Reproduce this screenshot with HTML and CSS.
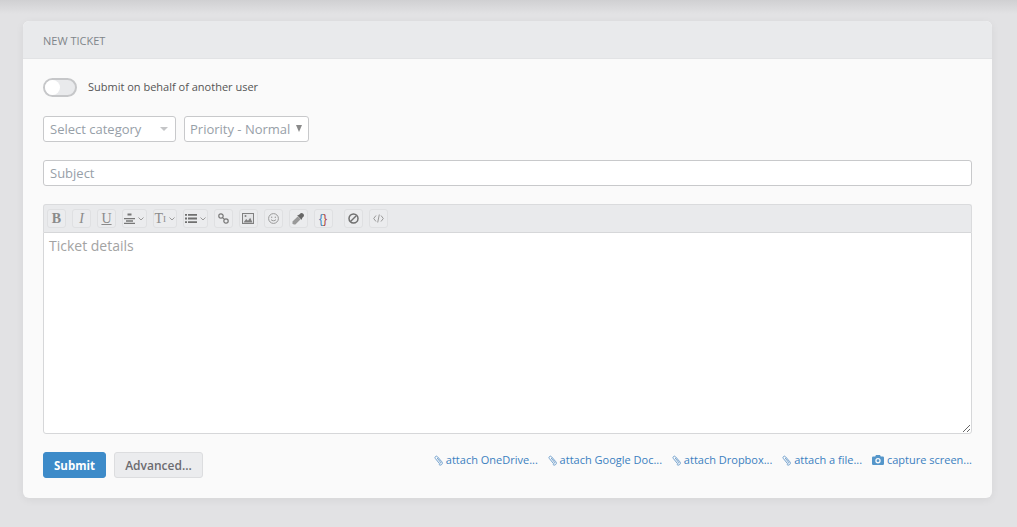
FILE: index.html
```html
<!DOCTYPE html>
<html lang="en">
<head>
    <meta charset="UTF-8">
    <title>New Ticket</title>
    <link rel="stylesheet" href="styles.css">
</head>
<body>
    <div class="top-shadow"></div>
    <div class="card">
        <div class="card-header">NEW TICKET</div>
        <div class="card-body">
            <div class="behalf-row">
                <span class="toggle"><span class="knob"></span></span>
                <span class="behalf-label">Submit on behalf of another user</span>
            </div>

            <div class="select-row">
                <div class="select select-category">
                    <span>Select category</span>
                    <span class="caret"></span>
                </div>
                <div class="select select-priority">
                    <span>Priority - Normal</span>
                    <span class="caret-big"></span>
                </div>
            </div>

            <input class="subject" type="text" placeholder="Subject">

            <div class="editor">
                <div class="toolbar">
                    <span class="tool tool-text bold">B</span>
                    <span class="tool tool-text italic">I</span>
                    <span class="tool tool-text underline">U</span>
                    <span class="tool tool-drop">
                        <svg width="11" height="11" viewBox="0 0 11 11"><path d="M3.500 0.500h4v2h-4zM0 5h11v1.200H0zM2 7.300h7v1.500H2zM0 9.800h11V11H0z" fill="#777"/></svg>
                        <svg class="chev" width="6" height="4" viewBox="0 0 6 4"><path d="M0.500 0.500l2.500 2.500 2.500-2.500" fill="none" stroke="#999"/></svg>
                    </span>
                    <span class="tool tool-drop tool-size">
                        <span class="size-t">T</span><span class="size-i">I</span>
                        <svg class="chev" width="6" height="4" viewBox="0 0 6 4"><path d="M0.500 0.500l2.500 2.500 2.500-2.500" fill="none" stroke="#999"/></svg>
                    </span>
                    <span class="tool tool-drop">
                        <svg width="12" height="9" viewBox="0 0 12 9"><path d="M0 0h2v1.800H0zM3 0h9v1.800H3zM0 3.600h2v1.800H0zM3 3.600h9v1.800H3zM0 7.200h2V9H0zM3 7.200h9V9H3z" fill="#707070"/></svg>
                        <svg class="chev" width="6" height="4" viewBox="0 0 6 4"><path d="M0.500 0.500l2.500 2.500 2.500-2.500" fill="none" stroke="#999"/></svg>
                    </span>
                    <span class="tool">
                        <svg width="11" height="11" viewBox="0 0 11 11"><g fill="none" stroke="#777" stroke-width="1.200"><circle cx="3" cy="3" r="2.200"/><circle cx="8" cy="8" r="2.200"/><path d="M4.300 4.300l2.400 2.400"/></g></svg>
                    </span>
                    <span class="tool">
                        <svg width="12" height="11" viewBox="0 0 12 11"><rect x="0.500" y="0.500" width="11" height="10" fill="#e4e5e7" stroke="#808080"/><path d="M1.500 9.500l2.700-3.500 1.800 1.700 2.200-3 2.300 4.800z" fill="#808080"/><circle cx="3.500" cy="3" r="1" fill="#808080"/></svg>
                    </span>
                    <span class="tool">
                        <svg width="11" height="11" viewBox="0 0 11 11"><circle cx="5.500" cy="5.500" r="4.900" fill="none" stroke="#999"/><circle cx="3.700" cy="4.200" r="0.700" fill="#999"/><circle cx="7.300" cy="4.200" r="0.700" fill="#999"/><path d="M3 6.500c0.700 1.700 4.300 1.700 5 0" fill="none" stroke="#999"/></svg>
                    </span>
                    <span class="tool">
                        <svg width="12" height="12" viewBox="0 0 12 12"><path d="M8 0.800a1.800 1.800 0 0 1 3.200 3.200L9.800 5.300l0.500 0.500-0.900 0.900-4.100-4.100 0.900-0.900 0.500 0.500z" fill="#666"/><path d="M5.700 3.400l2.900 2.900L3.400 11.500H1.700L0.500 10.300V8.600z" fill="#999"/></svg>
                    </span>
                    <span class="tool tool-code"><span class="brace-blue">{</span><span class="brace-red">}</span></span>
                    <span class="tool tool-gap">
                        <svg width="11" height="11" viewBox="0 0 11 11"><circle cx="5.500" cy="5.500" r="4.500" fill="none" stroke="#707070" stroke-width="1.500"/><path d="M2.500 8.500l6-6" stroke="#707070" stroke-width="1.500"/></svg>
                    </span>
                    <span class="tool">
                        <svg width="11" height="9" viewBox="0 0 11 9"><path d="M3 1.500L0.700 4.500 3 7.500M8 1.500l2.300 3-2.300 3M6.300 0.500L4.700 8.500" fill="none" stroke="#999"/></svg>
                    </span>
                </div>
                <textarea class="details" placeholder="Ticket details"></textarea>
            </div>

            <div class="actions">
                <div class="buttons">
                    <button class="btn btn-primary" type="button">Submit</button>
                    <button class="btn btn-default" type="button">Advanced...</button>
                </div>
                <div class="attach-links">
                    <a href="#"><svg class="clip" width="9" height="11" viewBox="0 0 10 11"><path d="M3.500 2.800l3.600 4.400a.9.900 0 0 1-1.400 1.200L1.500 3.300a1.500 1.500 0 0 1 2.400-2l4.800 5.600a2.200 2.200 0 0 1-3.400 2.900" fill="none" stroke="#6f9fcc" stroke-width="1.100"/></svg>attach OneDrive...</a>
                    <a href="#"><svg class="clip" width="9" height="11" viewBox="0 0 10 11"><path d="M3.500 2.800l3.600 4.400a.9.900 0 0 1-1.400 1.200L1.500 3.300a1.500 1.500 0 0 1 2.400-2l4.800 5.600a2.200 2.200 0 0 1-3.400 2.900" fill="none" stroke="#6f9fcc" stroke-width="1.100"/></svg>attach Google Doc...</a>
                    <a href="#"><svg class="clip" width="9" height="11" viewBox="0 0 10 11"><path d="M3.500 2.800l3.600 4.400a.9.900 0 0 1-1.400 1.200L1.500 3.300a1.500 1.500 0 0 1 2.400-2l4.800 5.600a2.200 2.200 0 0 1-3.400 2.900" fill="none" stroke="#6f9fcc" stroke-width="1.100"/></svg>attach Dropbox...</a>
                    <a href="#"><svg class="clip" width="9" height="11" viewBox="0 0 10 11"><path d="M3.500 2.800l3.600 4.400a.9.900 0 0 1-1.400 1.200L1.500 3.300a1.500 1.500 0 0 1 2.400-2l4.800 5.600a2.200 2.200 0 0 1-3.400 2.900" fill="none" stroke="#6f9fcc" stroke-width="1.100"/></svg>attach a file...</a>
                    <a href="#"><svg class="camera" width="12" height="10" viewBox="0 0 12 10"><path fill-rule="evenodd" d="M1.200 1.500h2L4 0h4l0.800 1.500h2A1.200 1.200 0 0 1 12 2.700v6.100A1.200 1.200 0 0 1 10.800 10H1.200A1.200 1.200 0 0 1 0 8.800V2.700A1.200 1.200 0 0 1 1.200 1.500zM6 3a2.700 2.700 0 1 0 0 5.400A2.700 2.700 0 0 0 6 3zM6 4.300a1.400 1.400 0 1 1 0 2.800 1.400 1.400 0 0 1 0-2.800z" fill="#5596ca"/></svg>capture screen...</a>
                </div>
            </div>
        </div>
    </div>
</body>
</html>
```

FILE: styles.css
```css
* {
    box-sizing: border-box;
}
html, body {
    height: 100%;
}
body {
    font-family: "Open Sans", sans-serif;
    margin: 0;
    padding: 21px 25px 29px 23px;
    background-color: #e2e2e4;
    color: #555;
    overflow: hidden;
}
.top-shadow {
    position: absolute;
    left: 0;
    right: 0;
    top: 0;
    height: 14px;
    background: linear-gradient(#d0d0d2, #e2e2e4);
}
.card {
    position: relative;
    background-color: #fafafa;
    border-radius: 6px;
    box-shadow: 0 2px 8px rgba(0, 0, 0, 0.06);
    overflow: hidden;
}
.card-header {
    height: 38px;
    line-height: 40px;
    padding-left: 20px;
    font-size: 11px;
    color: #80858a;
    background-color: #e9eaec;
    border-bottom: 1px solid #e2e3e5;
}
.card-body {
    padding: 19px 20px 20px;
}
.behalf-row {
    display: flex;
    align-items: center;
    height: 19px;
}
.toggle {
    display: block;
    width: 34px;
    height: 19px;
    border-radius: 10px;
    border: 2px solid #c6c7c9;
    background-color: #e9eaec;
}
.knob {
    display: block;
    width: 15px;
    height: 15px;
    border-radius: 50%;
    background-color: #fff;
}
.behalf-label {
    margin-left: 11px;
    padding-bottom: 2px;
    font-size: 11px;
    color: #555;
}
.select-row {
    display: flex;
    gap: 8px;
    margin-top: 19px;
}
.select {
    display: flex;
    align-items: center;
    justify-content: space-between;
    height: 26px;
    padding: 0 6px;
    font-size: 13px;
    color: #97a0a8;
    background-color: #fff;
    border: 1px solid #c8c9cb;
    border-radius: 3px;
}
.select-category {
    width: 133px;
}
.select-priority {
    width: 125px;
    padding-left: 5px;
    padding-right: 6px;
}
.caret {
    width: 0;
    height: 0;
    margin-right: 1px;
    border-left: 4px solid transparent;
    border-right: 4px solid transparent;
    border-top: 4px solid #c4c5c7;
}
.caret-big {
    width: 0;
    height: 0;
    margin-bottom: 2px;
    border-left: 3.500px solid transparent;
    border-right: 3.500px solid transparent;
    border-top: 7px solid #8a8a8a;
}
.subject {
    display: block;
    width: 100%;
    height: 26px;
    margin-top: 18px;
    padding: 0 6px;
    font-family: inherit;
    font-size: 13px;
    background-color: #fff;
    border: 1px solid #c8c9cb;
    border-radius: 3px;
    outline: none;
}
.subject::placeholder {
    color: #97a0a8;
    opacity: 1;
}
.editor {
    margin-top: 18px;
}
.toolbar {
    display: flex;
    align-items: center;
    gap: 6px;
    height: 28px;
    padding: 0 3px;
    background-color: #e9eaec;
    border: 1px solid #dadbdd;
    border-bottom: none;
    border-radius: 3px 3px 0 0;
}
.tool {
    display: flex;
    align-items: center;
    justify-content: center;
    flex-shrink: 0;
    width: 19px;
    height: 19px;
    gap: 3px;
    border: 1px solid #dfe0e2;
    border-radius: 3px;
    background-color: #ebecee;
    color: #8a8a8a;
}
.tool-text {
    font-family: "Liberation Serif", serif;
    font-size: 14px;
}
.bold {
    font-weight: bold;
}
.italic {
    font-style: italic;
}
.underline {
    text-decoration: underline;
}
.tool-drop {
    width: 24.500px;
}
.size-t {
    font-family: "Liberation Serif", serif;
    font-size: 14px;
    line-height: 1;
}
.size-i {
    margin-left: -3px;
    font-family: "Liberation Serif", serif;
    font-size: 9px;
}
.tool-code {
    font-family: "Liberation Sans", sans-serif;
    font-size: 12px;
    gap: 0;
}
.brace-blue {
    color: #3d7fb8;
}
.brace-red {
    color: #a8413a;
}
.tool-gap {
    margin-left: 5px;
}
.details {
    display: block;
    width: 100%;
    height: 202px;
    padding: 3px 5px;
    font-family: inherit;
    font-size: 14px;
    background-color: #fff;
    border: 1px solid #d6d7d9;
    border-radius: 0 0 3px 3px;
    outline: none;
    resize: vertical;
}
.details::placeholder {
    color: #a3a3a3;
    opacity: 1;
}
.actions {
    display: flex;
    justify-content: space-between;
    align-items: flex-start;
    margin-top: 18px;
}
.buttons {
    display: flex;
    gap: 8px;
}
.btn {
    height: 26px;
    padding: 0;
    font-family: inherit;
    font-size: 11.500px;
    border-radius: 3px;
}
.btn-primary {
    width: 63px;
    font-weight: bold;
    color: #fff;
    background-color: #3d8bc9;
    border: 1px solid #3d8bc9;
}
.btn-default {
    width: 89px;
    font-size: 12px;
    font-weight: 600;
    color: #6b6b70;
    background-color: #ebecee;
    border: 1px solid #dcdddf;
}
.attach-links {
    display: flex;
    gap: 9.750px;
    font-size: 11px;
    line-height: 16px;
}
.attach-links a {
    display: flex;
    align-items: center;
    color: #3a7fc0;
    text-decoration: none;
}
.clip {
    margin-right: 3px;
}
.camera {
    margin-right: 3px;
}
```
